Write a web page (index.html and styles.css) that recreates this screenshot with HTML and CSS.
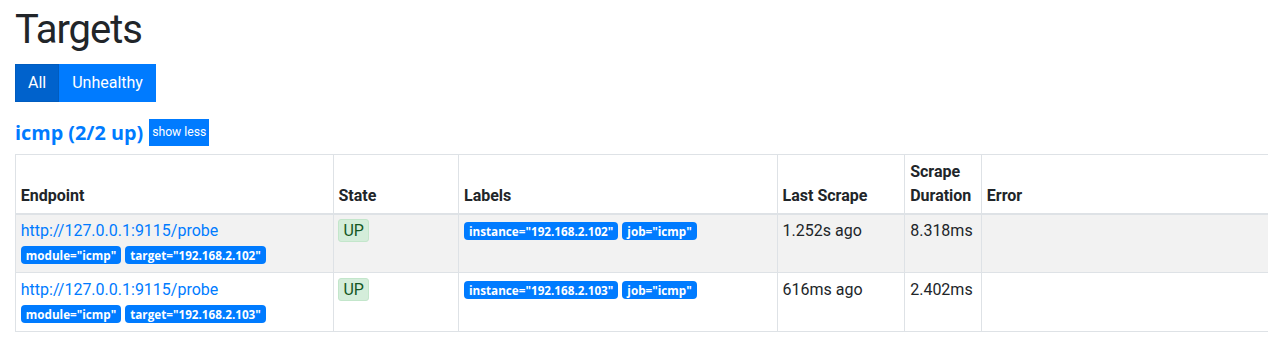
FILE: index.html
```html
<!DOCTYPE html>
<html lang="en">
<head>
<meta charset="utf-8">
<title>Targets</title>
<link rel="stylesheet" href="styles.css">
</head>
<body>
<div class="container">
  <h1 class="title">Targets</h1>
  <div class="btn-group">
    <button class="btn active">All</button>
    <button class="btn">Unhealthy</button>
  </div>
  <div class="pool-head">
    <a class="pool-link" href="#">icmp (2/2 up)</a>
    <button class="btn btn-xs">show less</button>
  </div>
  <table class="targets">
    <thead>
      <tr>
        <th class="c-endpoint">Endpoint</th>
        <th class="c-state">State</th>
        <th class="c-labels">Labels</th>
        <th class="c-last">Last Scrape</th>
        <th class="c-dur">Scrape Duration</th>
        <th class="c-err">Error</th>
      </tr>
    </thead>
    <tbody>
      <tr class="striped">
        <td>
          <a class="endpoint" href="#">http://127.0.0.1:9115/probe</a>
          <div class="badges"><span class="badge">module="icmp"</span><span class="badge">target="192.168.2.102"</span></div>
        </td>
        <td><span class="state">UP</span></td>
        <td><div class="badges"><span class="badge">instance="192.168.2.102"</span><span class="badge">job="icmp"</span></div></td>
        <td>1.252s ago</td>
        <td>8.318ms</td>
        <td></td>
      </tr>
      <tr>
        <td>
          <a class="endpoint" href="#">http://127.0.0.1:9115/probe</a>
          <div class="badges"><span class="badge">module="icmp"</span><span class="badge">target="192.168.2.103"</span></div>
        </td>
        <td><span class="state">UP</span></td>
        <td><div class="badges"><span class="badge">instance="192.168.2.103"</span><span class="badge">job="icmp"</span></div></td>
        <td>616ms ago</td>
        <td>2.402ms</td>
        <td></td>
      </tr>
    </tbody>
  </table>
</div>
</body>
</html>
```
FILE: styles.css
```css
html, body {
  margin: 0;
  overflow: hidden;
}
body {
  font-family: Roboto, "Open Sans", sans-serif;
  font-size: 16px;
  line-height: 1.5;
  color: #212529;
  background: #fff;
}
.container {
  padding: 0 15px;
}
.title {
  font-size: 40px;
  font-weight: 400;
  line-height: 48px;
  letter-spacing: -1px;
  margin: 0 0 10px;
  padding-top: 6px;
}
.btn-group {
  display: flex;
}
.btn {
  font-family: inherit;
  font-size: 16px;
  line-height: 24px;
  padding: 6px 12px;
  border: 1px solid #007bff;
  background: #007bff;
  color: #fff;
  border-radius: 0;
  cursor: pointer;
}
.btn.active {
  background: #0062cc;
  border-color: #005cbf;
}
.pool-head {
  display: flex;
  align-items: center;
  gap: 6px;
  margin: 17px 0 8px;
}
.pool-link {
  font-family: "Open Sans", Roboto, sans-serif;
  font-size: 19.8px;
  font-weight: 700;
  color: #007bff;
  text-decoration: none;
  line-height: 1.2;
}
.btn-xs {
  font-size: 12.2px;
  line-height: 19px;
  padding: 3px 2px;
}
.targets {
  border-collapse: collapse;
  table-layout: fixed;
  width: 1320px;
}
.targets th, .targets td {
  border: 1px solid #dee2e6;
  padding: 4.8px;
  text-align: left;
  vertical-align: top;
}
.targets th {
  vertical-align: bottom;
  border-bottom-width: 2px;
  font-weight: 700;
}
.c-endpoint { width: 307px; }
.c-state { width: 115px; }
.c-labels { width: 308px; }
.c-last { width: 117px; }
.c-dur { width: 66px; }
.striped td {
  background: #f2f2f2;
}
.endpoint {
  color: #007bff;
  text-decoration: none;
}
.badges {
  line-height: 24px;
}
.badge {
  display: inline-block;
  vertical-align: baseline;
  background: #007bff;
  color: #fff;
  font-family: "Open Sans", Roboto, sans-serif;
  font-size: 11.7px;
  font-weight: 700;
  line-height: 12px;
  padding: 3px 5px;
  margin-right: 4px;
  border-radius: 4px;
  white-space: nowrap;
}
.state {
  display: inline-block;
  background: #d4edda;
  color: #155724;
  border: 1px solid #c3e6cb;
  border-radius: 3px;
  padding: 0 4px;
  line-height: 21px;
}
```
